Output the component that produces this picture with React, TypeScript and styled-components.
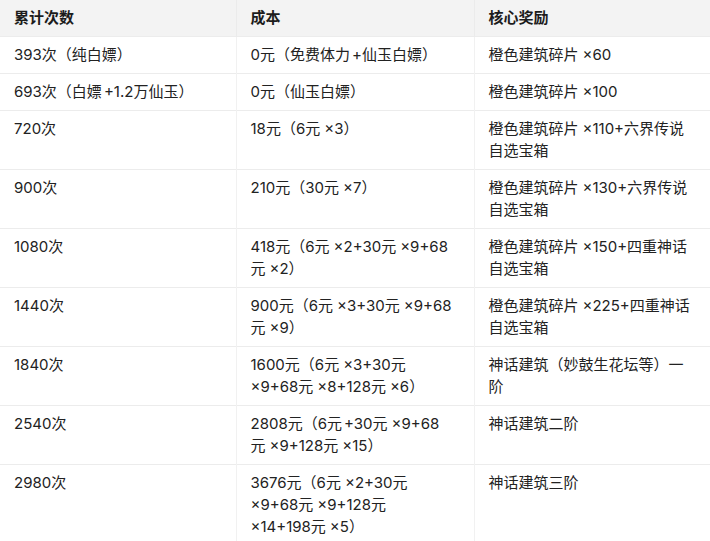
import React from "react";
import styled, { createGlobalStyle } from "styled-components";

const Global = createGlobalStyle`
  html, body { margin: 0; padding: 0; background: #ffffff; }
  body {
    font-family: "Inter", "Noto Sans CJK SC", "Noto Sans", sans-serif;
    color: #222222;
  }
`;

const Page = styled.div`
  width: 710px;
  height: 541px;
  overflow: hidden;
  background: #ffffff;
`;

const Table = styled.table`
  width: 710px;
  border-collapse: collapse;
  table-layout: fixed;
`;

const Col = styled.col<{ $w: number }>`
  width: ${(p) => p.$w}px;
`;

const HeadRow = styled.tr`
  background: #f3f3f3;
`;

const HeadCell = styled.th`
  text-align: left;
  font-weight: 700;
  font-size: 15px;
  line-height: 22px;
  padding: 7px 15px 7px 14px;
  color: #1c1c1c;
  border-right: 1px solid #ebebeb;
  &:last-child { border-right: none; }
`;

const Row = styled.tr`
  border-top: 1px solid #ececec;
`;

const Cell = styled.td`
  vertical-align: top;
  font-size: 15px;
  line-height: 22px;
  padding: 7px 15px 7px 14px;
  color: #222222;
  border-right: 1px solid #f1f1f1;
  &:last-child { border-right: none; }
`;

const Line = styled.div`
  white-space: nowrap;
`;

const Sign = styled.span<{ $gap: number }>`
  margin-left: ${(p) => p.$gap}px;
`;

const isCjk = (c: string) => /[\u3400-\u9fff]/.test(c);

function renderLine(s: string) {
  const out: React.ReactNode[] = [];
  let buf = "";
  const chars = Array.from(s);
  chars.forEach((c, i) => {
    const prev = i > 0 ? chars[i - 1] : "";
    if ((c === "×" || c === "+") && prev && isCjk(prev)) {
      if (buf) out.push(<React.Fragment key={"b" + i}>{buf}</React.Fragment>);
      buf = "";
      out.push(
        <Sign key={"s" + i} $gap={c === "×" ? 4 : 2}>
          {c}
        </Sign>
      );
    } else {
      buf += c;
    }
  });
  if (buf) out.push(<React.Fragment key="end">{buf}</React.Fragment>);
  return out;
}

type Lines = string[];

const rows: [Lines, Lines, Lines][] = [
  [["393次（纯白嫖）"], ["0元（免费体力+仙玉白嫖）"], ["橙色建筑碎片×60"]],
  [["693次（白嫖+1.2万仙玉）"], ["0元（仙玉白嫖）"], ["橙色建筑碎片×100"]],
  [["720次"], ["18元（6元×3）"], ["橙色建筑碎片×110+六界传说", "自选宝箱"]],
  [["900次"], ["210元（30元×7）"], ["橙色建筑碎片×130+六界传说", "自选宝箱"]],
  [["1080次"], ["418元（6元×2+30元×9+68", "元×2）"], ["橙色建筑碎片×150+四重神话", "自选宝箱"]],
  [["1440次"], ["900元（6元×3+30元×9+68", "元×9）"], ["橙色建筑碎片×225+四重神话", "自选宝箱"]],
  [["1840次"], ["1600元（6元×3+30元", "×9+68元×8+128元×6）"], ["神话建筑（妙鼓生花坛等）一", "阶"]],
  [["2540次"], ["2808元（6元+30元×9+68", "元×9+128元×15）"], ["神话建筑二阶"]],
  [["2980次"], ["3676元（6元×2+30元", "×9+68元×9+128元", "×14+198元×5）"], ["神话建筑三阶"]],
];

function CellLines({ lines }: { lines: Lines }) {
  return (
    <Cell>
      {lines.map((l, i) => (
        <Line key={i}>{renderLine(l)}</Line>
      ))}
    </Cell>
  );
}

export default function App() {
  return (
    <Page>
      <Global />
      <Table>
        <colgroup>
          <Col $w={236} />
          <Col $w={238} />
          <Col $w={236} />
        </colgroup>
        <thead>
          <HeadRow>
            <HeadCell>累计次数</HeadCell>
            <HeadCell>成本</HeadCell>
            <HeadCell>核心奖励</HeadCell>
          </HeadRow>
        </thead>
        <tbody>
          {rows.map((r) => (
            <Row key={r[0][0]}>
              <CellLines lines={r[0]} />
              <CellLines lines={r[1]} />
              <CellLines lines={r[2]} />
            </Row>
          ))}
        </tbody>
      </Table>
    </Page>
  );
}
